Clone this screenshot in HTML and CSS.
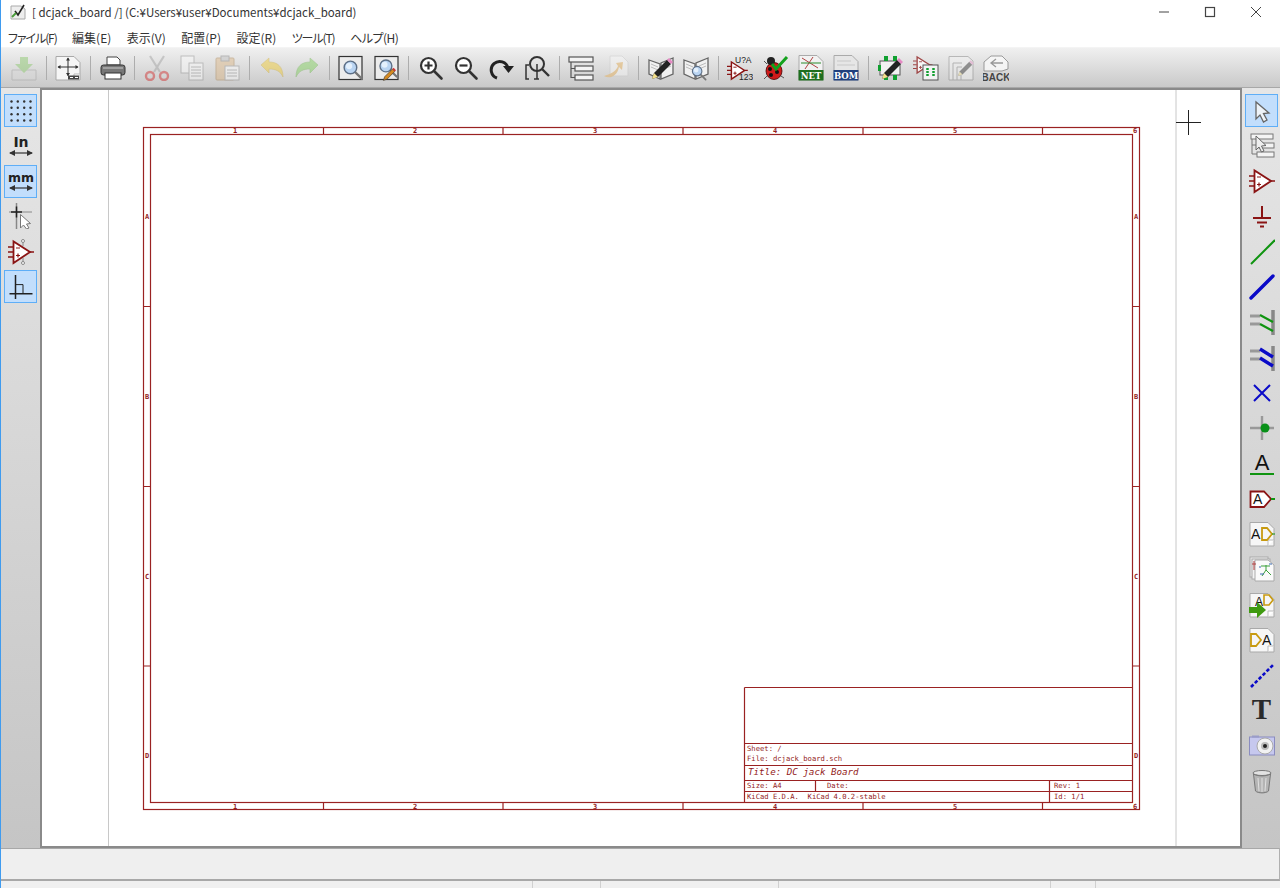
FILE: index.html

```html
<!DOCTYPE html>
<html>
<head>
    <title>dcjack_board</title>
    <link rel="stylesheet" href="styles.css">
</head>
<body>
<svg class="defs" width="0" height="0">
    <defs>
        <g id="amp">
            <path d="M5.5 2.5V24L22 13Z" fill="#fff" stroke="#8a1414" stroke-width="1.8" stroke-linejoin="miter"/>
            <path d="M0 8H5M0 13H5M0 18H5M22 13H26" stroke="#8a1414" stroke-width="1.5"/>
            <path d="M8 9H12M8 16.5H12M10 14.5V18.5" stroke="#8a1414" stroke-width="1.2"/>
        </g>
        <g id="lens">
            <path d="M15 15L23 23" stroke="#777" stroke-width="2.6" stroke-linecap="round"/>
            <circle cx="10.5" cy="10.5" r="7" fill="#b9d4f2" stroke="#5d6f86" stroke-width="1.6"/>
            <circle cx="9" cy="9" r="3.5" fill="#e4f0fc"/>
        </g>
        <g id="zoomglass">
            <circle cx="10.5" cy="10.5" r="7.5" fill="#fff" stroke="#333" stroke-width="2.2"/>
            <path d="M16 16L23.5 23.5" stroke="#333" stroke-width="2.6" stroke-linecap="round"/>
        </g>
        <g id="pencil">
            <path d="M4 24L6 18L19 5L23 9L10 22Z" fill="#222"/>
            <path d="M4 24L6 18L10 22Z" fill="#f3df8a"/>
            <path d="M19 5L21 3L25 7L23 9Z" fill="#e58ac4"/>
        </g>
        <g id="book">
            <path d="M1 5L12 9V24L1 19Z" fill="#f1f1f1" stroke="#666" stroke-width="1.3"/>
            <path d="M25 3L13 8V24L25 19Z" fill="#f1f1f1" stroke="#666" stroke-width="1.3"/>
            <path d="M3 9L10 12M3 12L10 15M16 11L23 8M16 14L23 11" stroke="#bbb" stroke-width="1"/>
        </g>
        <g id="doc">
            <path d="M1 1.5H19L25 7.5V25H1Z" fill="#f6f6f6" stroke="#a9a9a9"/>
            <path d="M19 25V19H25" fill="#fff" stroke="#bbb"/>
        </g>
    </defs>
</svg>

<div class="window">
    <div class="titlebar">
        <svg class="app-icon" viewBox="0 0 16 16">
            <path d="M1 2H11L15 5V15H1Z" fill="#eee" stroke="#aaa"/>
            <path d="M5 7L8 11L14 1" fill="none" stroke="#222" stroke-width="1.6"/>
            <path d="M2 13L6 9" stroke="#4a9c3a" stroke-width="2"/>
        </svg>
        <span class="title-text">[ dcjack_board /] (C:¥Users¥user¥Documents¥dcjack_board)</span>
        <div class="win-buttons">
            <div class="win-btn"><svg viewBox="0 0 12 12" width="12" height="12"><path d="M1 6H11" stroke="#444" stroke-width="1"/></svg></div>
            <div class="win-btn"><svg viewBox="0 0 12 12" width="12" height="12"><rect x="1.5" y="1.5" width="9" height="9" fill="none" stroke="#444" stroke-width="1.2"/></svg></div>
            <div class="win-btn"><svg viewBox="0 0 12 12" width="12" height="12"><path d="M1 1L11 11M11 1L1 11" stroke="#444" stroke-width="1"/></svg></div>
        </div>
    </div>

    <div class="menubar">
        <span class="kana">ファイル(F)</span>
        <span>編集(E)</span>
        <span>表示(V)</span>
        <span>配置(P)</span>
        <span>設定(R)</span>
        <span class="kana">ツール(T)</span>
        <span class="kana-wide">ヘルプ(H)</span>
    </div>

    <div class="toolbar">
        <div class="tool off"><svg viewBox="0 0 26 26"><path d="M1 15H25V25H1Z" fill="#d8d8d8" stroke="#999"/><path d="M9 2H17V9H22L13 18L4 9H9Z" fill="#7fc45c"/></svg></div>
        <div class="sep"></div>
        <div class="tool"><svg viewBox="0 0 26 26"><use href="#doc"/><path d="M13 3V21M3 12H23" stroke="#333" stroke-width="1"/><path d="M13 2.500L11 5.500H15ZM13 21L11 18H15ZM2.500 12L5.500 10V14ZM23.500 12L20.500 10V14Z" fill="#333"/><rect x="13" y="20.500" width="11" height="4" fill="#444"/><path d="M15 22.500H18M20 22.500H23" stroke="#fff"/></svg></div>
        <div class="sep"></div>
        <div class="tool"><svg viewBox="0 0 26 26"><path d="M7 2H17L20 5V10H7Z" fill="#fff" stroke="#444"/><rect x="1" y="10" width="24" height="10" rx="2.5" fill="#777" stroke="#333"/><rect x="5" y="18" width="16" height="6" fill="#fff" stroke="#333"/><path d="M3 13H23" stroke="#ccc"/></svg></div>
        <div class="sep"></div>
        <div class="tool off"><svg viewBox="0 0 26 26"><path d="M6 1L16 17M20 1L10 17" stroke="#999" stroke-width="2.2"/><circle cx="6" cy="21" r="4" fill="none" stroke="#d01818" stroke-width="2.4"/><circle cx="20" cy="21" r="4" fill="none" stroke="#d01818" stroke-width="2.4"/></svg></div>
        <div class="tool off"><svg viewBox="0 0 26 26"><rect x="2" y="1" width="13" height="17" fill="#fff" stroke="#888"/><rect x="10" y="8" width="14" height="17" fill="#fff" stroke="#888"/><path d="M12 12H22M12 15H22M12 18H22M12 21H22" stroke="#888"/></svg></div>
        <div class="tool off"><svg viewBox="0 0 26 26"><rect x="2" y="3" width="18" height="22" rx="1" fill="#dcb27c" stroke="#a57c46"/><rect x="7" y="1" width="8" height="5" fill="#bbb" stroke="#777"/><rect x="11" y="11" width="14" height="14" fill="#fff" stroke="#888"/><path d="M13 15H23M13 18H23M13 21H23" stroke="#888"/></svg></div>
        <div class="sep"></div>
        <div class="tool off"><svg viewBox="0 0 26 26"><path d="M2 10L10 3V7C18 7 24 11 24 22C21 16 17 14 10 14V18Z" fill="#f2c81e" stroke="#c69c10" stroke-width=".6"/></svg></div>
        <div class="tool off"><svg viewBox="0 0 26 26"><path d="M24 10L16 3V7C8 7 2 11 2 22C5 16 9 14 16 14V18Z" fill="#73cc4b" stroke="#52a42e" stroke-width=".6"/></svg></div>
        <div class="sep"></div>
        <div class="tool"><svg viewBox="0 0 26 26"><rect x="1" y="1.5" width="23" height="23" fill="#ececec" stroke="#333" stroke-width="1.2"/><g transform="translate(3 3) scale(.9)"><use href="#lens"/></g></svg></div>
        <div class="tool"><svg viewBox="0 0 26 26"><rect x="1" y="1.5" width="23" height="23" fill="#ececec" stroke="#333" stroke-width="1.2"/><g transform="translate(3 2) scale(.85)"><use href="#lens"/></g><g transform="translate(7 11) scale(.6)"><path d="M4 24L6 18L19 5L23 9L10 22Z" fill="#d58a22" stroke="#333"/><path d="M19 5L21 3L25 7L23 9Z" fill="#d03030"/></g></svg></div>
        <div class="sep"></div>
        <div class="tool"><svg viewBox="0 0 26 26"><use href="#zoomglass"/><path d="M6.5 10.5H14.5M10.5 6.5V14.5" stroke="#333" stroke-width="2.2"/></svg></div>
        <div class="tool"><svg viewBox="0 0 26 26"><use href="#zoomglass"/><path d="M6.5 10.5H14.5" stroke="#333" stroke-width="2.2"/></svg></div>
        <div class="tool"><svg viewBox="0 0 26 26"><path d="M8 23A8.5 8.5 0 1 1 19 13" fill="none" stroke="#222" stroke-width="3"/><path d="M14 11H25L19.500 18Z" fill="#222"/></svg></div>
        <div class="tool"><svg viewBox="0 0 26 26"><circle cx="13" cy="9" r="7" fill="none" stroke="#333" stroke-width="2"/><path d="M18 14L25 21" stroke="#333" stroke-width="2.4"/><path d="M5 10H2V24H5M13 9V24M10 24H15" fill="none" stroke="#333" stroke-width="1.5"/></svg></div>
        <div class="sep"></div>
        <div class="tool"><svg viewBox="0 0 26 26"><rect x="1" y="2" width="24" height="5" fill="#f4f4f4" stroke="#555" stroke-width="1.2"/><rect x="7" y="11" width="18" height="5" fill="#f4f4f4" stroke="#555" stroke-width="1.2"/><rect x="7" y="20" width="18" height="5" fill="#f4f4f4" stroke="#555" stroke-width="1.2"/><path d="M3 7V22.500H7M3 13.500H7" fill="none" stroke="#555" stroke-width="1.2"/></svg></div>
        <div class="tool off"><svg viewBox="0 0 26 26"><path d="M7 1H19L25 7V21H7Z" fill="#fafafa" stroke="#c8c8c8"/><path d="M1 21C6 24 14 22 16 12L19 15L20 7L13 8L15 11C13 17 7 19 1 21Z" fill="#e8aa48"/></svg></div>
        <div class="sep"></div>
        <div class="tool"><svg viewBox="0 0 26 26"><use href="#book"/><use href="#pencil"/></svg></div>
        <div class="tool"><svg viewBox="0 0 26 26"><use href="#book"/><g transform="translate(7 9) scale(.68)"><use href="#lens"/></g></svg></div>
        <div class="sep"></div>
        <div class="tool"><svg viewBox="0 0 26 26"><g transform="translate(0 5) scale(.8)"><use href="#amp"/></g><text x="8" y="8" class="ic-annot">U?A</text><text x="12" y="25" class="ic-annot">123</text></svg></div>
        <div class="tool"><svg viewBox="0 0 26 26"><ellipse cx="11" cy="16" rx="8" ry="8.500" fill="#d01a1a" stroke="#400" stroke-width=".8"/><circle cx="8" cy="6" r="4" fill="#222"/><circle cx="7" cy="14" r="2" fill="#111"/><circle cx="14" cy="17" r="2" fill="#111"/><circle cx="8" cy="20" r="2" fill="#111"/><path d="M1 6L4 9M1 24L4 21M21 23L18 21" stroke="#555"/><path d="M9 9L13 14L24 2" fill="none" stroke="#13a11c" stroke-width="3"/></svg></div>
        <div class="tool"><svg viewBox="0 0 26 26"><path d="M1 0.500H19L25 6.500V25H1Z" fill="#f2f2f2" stroke="#aaa"/><path d="M4 3L20 13M15 2L7 14" stroke="#b04040"/><path d="M3 8H23" stroke="#2d8a2d"/><rect x="0.500" y="15" width="25" height="10.500" fill="#1e6e1e"/><text x="13" y="24" class="ic-label">NET</text></svg></div>
        <div class="tool"><svg viewBox="0 0 26 26"><path d="M1 0.500H19L25 6.500V25H1Z" fill="#e6e6e6" stroke="#aaa"/><path d="M4 6H18M4 10H22" stroke="#c8c8c8"/><rect x="0.500" y="15" width="25" height="10.500" fill="#20407e"/><text x="13" y="24" class="ic-label">BOM</text></svg></div>
        <div class="sep"></div>
        <div class="tool"><svg viewBox="0 0 26 26"><rect x="2" y="6" width="20" height="14" fill="#f2f2f2" stroke="#555"/><path d="M6 1H10V6H6ZM15 1H19V6H15ZM6 20H10V25H6ZM15 20H19V25H15ZM0 10H3V16H0Z" fill="#10a030"/><use href="#pencil"/></svg></div>
        <div class="tool"><svg viewBox="0 0 26 26"><g opacity=".75" transform="scale(.75)"><use href="#amp"/></g><rect x="10" y="10" width="15" height="15" fill="#f4f4f4" stroke="#555"/><path d="M14.500 13V22M20.500 13V22" stroke="#12a030" stroke-width="2.500" stroke-dasharray="2 1"/></svg></div>
        <div class="tool off"><svg viewBox="0 0 26 26"><path d="M1 1.500H20L25 6V25H1Z" fill="#f5f5f5" stroke="#777"/><path d="M5 25V8H14M9 25V12H14M13 25V17" fill="none" stroke="#777"/><g transform="translate(7 3) scale(.75)"><use href="#pencil"/></g></svg></div>
        <div class="tool off back"><svg viewBox="0 0 26 26"><path d="M1 7L8 1H19L25 7V14L19 16H1Z" fill="#fafafa" stroke="#888"/><path d="M20 8H9M13 4L8 8L13 12" fill="none" stroke="#888" stroke-width="1.3"/><text x="13" y="25.500" class="ic-back">BACK</text></svg></div>
    </div>

    <div class="middle">
        <div class="side-tools side-left">
            <div class="side-btn active"><svg viewBox="0 0 26 26"><g fill="#333"><circle cx="3.500" cy="3.500" r="1.200"/><circle cx="9.800" cy="3.500" r="1.200"/><circle cx="16.200" cy="3.500" r="1.200"/><circle cx="22.500" cy="3.500" r="1.200"/><circle cx="3.500" cy="9.800" r="1.200"/><circle cx="9.800" cy="9.800" r="1.200"/><circle cx="16.200" cy="9.800" r="1.200"/><circle cx="22.500" cy="9.800" r="1.200"/><circle cx="3.500" cy="16.200" r="1.200"/><circle cx="9.800" cy="16.200" r="1.200"/><circle cx="16.200" cy="16.200" r="1.200"/><circle cx="22.500" cy="16.200" r="1.200"/><circle cx="3.500" cy="22.500" r="1.200"/><circle cx="9.800" cy="22.500" r="1.200"/><circle cx="16.200" cy="22.500" r="1.200"/><circle cx="22.500" cy="22.500" r="1.200"/></g></svg></div>
            <div class="side-btn"><svg viewBox="0 0 26 26"><text x="13" y="14" class="ic-unit">In</text><path d="M2 20H24" stroke="#333" stroke-width="1.200"/><path d="M1 20L7 17V23ZM25 20L19 17V23Z" fill="#333"/></svg></div>
            <div class="side-btn active"><svg viewBox="0 0 26 26"><text x="13" y="14" class="ic-unit ic-mm">mm</text><path d="M2 20H24" stroke="#333" stroke-width="1.200"/><path d="M1 20L7 17V23ZM25 20L19 17V23Z" fill="#333"/></svg></div>
            <div class="side-btn"><svg viewBox="0 0 26 26"><path d="M8.500 0V26" stroke="#888" stroke-width="1.500"/><path d="M1 9H24" stroke="#888" stroke-width="1"/><path d="M3 9H14M8.500 3.500V14.500" stroke="#222" stroke-width="1.500"/><path d="M12.500 11.500V25L15.500 22L18.500 26L21 25L18.500 21L22.500 20.500Z" fill="#fff" stroke="#777"/></svg></div>
            <div class="side-btn"><svg viewBox="0 0 26 26"><use href="#amp"/><path d="M15 7V2M15 19V24" stroke="#888"/><circle cx="15" cy="2" r="1.500" fill="#fff" stroke="#888"/><circle cx="15" cy="24" r="1.500" fill="#fff" stroke="#888"/></svg></div>
            <div class="side-btn active"><svg viewBox="0 0 26 26"><path d="M7.500 1V25M1.500 19.700H24.500" stroke="#222" stroke-width="1.500"/><path d="M7.500 10.600H15V19.700" fill="none" stroke="#222"/></svg></div>
        </div>

        <div class="canvas">
            <svg class="sheet" viewBox="42 90 1198 756">
                <g fill="none" stroke="#c8c8c8">
                    <path d="M108.500 90V846M1176 90V846"/>
                </g>
                <g fill="none" stroke="#9a2222" stroke-width="1.200">
                    <rect x="143.500" y="127.500" width="996" height="682"/>
                    <rect x="150.500" y="134.500" width="982" height="668"/>
                    <path d="M323.500 127V134M503 127V134M683 127V134M863 127V134M1042.500 127V134"/>
                    <path d="M323.500 803V810M503 803V810M683 803V810M863 803V810M1042.500 803V810"/>
                    <path d="M144 306.500H151M144 486.500H151M144 666H151M1133 306.500H1140M1133 486.500H1140M1133 666H1140"/>
                    <path d="M744.500 687.500H1133M744.500 687.500V802M744.500 743.500H1133M744.500 765.500H1133M744.500 780.500H1133M744.500 791.500H1133M815.500 780V791M1049.500 780V802"/>
                </g>
                <g class="sheet-tick">
                    <text x="235" y="133">1</text><text x="415" y="133">2</text><text x="595" y="133">3</text><text x="775" y="133">4</text><text x="955" y="133">5</text><text x="1135" y="133">6</text>
                    <text x="235" y="809">1</text><text x="415" y="809">2</text><text x="595" y="809">3</text><text x="775" y="809">4</text><text x="955" y="809">5</text><text x="1135" y="809">6</text>
                    <text x="147" y="219">A</text><text x="147" y="399">B</text><text x="147" y="579">C</text><text x="147" y="758">D</text>
                    <text x="1136" y="219">A</text><text x="1136" y="399">B</text><text x="1136" y="579">C</text><text x="1136" y="758">D</text>
                </g>
                <g class="sheet-text">
                    <text x="747" y="751">Sheet: /</text>
                    <text x="747" y="761">File: dcjack_board.sch</text>
                    <text x="747" y="788">Size: A4</text>
                    <text x="827" y="788">Date:</text>
                    <text x="1054" y="788">Rev: 1</text>
                    <text x="747" y="798.500">KiCad E.D.A.  KiCad 4.0.2-stable</text>
                    <text x="1054" y="798.500">Id: 1/1</text>
                </g>
                <text x="748" y="775" class="sheet-title">Title: DC jack Board</text>
                <path d="M1176 122.500H1201M1188.500 110V135" stroke="#222" stroke-width="1"/>
            </svg>
        </div>

        <div class="side-tools side-right">
            <div class="side-btn active"><svg viewBox="0 0 26 26"><path d="M7 4V21L11 17L14.500 24L18 22L14.500 15.500L20 15Z" fill="#eef3f8" stroke="#666" stroke-width="1.300"/></svg></div>
            <div class="side-btn"><svg viewBox="0 0 26 26"><rect x="2" y="1" width="22" height="5" fill="#f4f4f4" stroke="#777"/><rect x="10" y="10" width="15" height="5" fill="#f4f4f4" stroke="#777"/><rect x="8" y="19" width="17" height="5" fill="#f4f4f4" stroke="#777"/><path d="M3 6V21H8M3 12H10" fill="none" stroke="#777"/><path d="M7 3V17L10 14L12.500 19L15 18L12.500 13L17 12.500Z" fill="#eee" stroke="#666"/></svg></div>
            <div class="side-btn"><svg viewBox="0 0 26 26"><use href="#amp"/></svg></div>
            <div class="side-btn"><svg viewBox="0 0 26 26"><path d="M13 3V15M4 15H22M8 19.500H18M11 23.500H15" stroke="#8a1414" stroke-width="2"/></svg></div>
            <div class="side-btn"><svg viewBox="0 0 26 26"><path d="M2 25L26 1" stroke="#0f9410" stroke-width="2"/></svg></div>
            <div class="side-btn"><svg viewBox="0 0 26 26"><path d="M2 24L24 2" stroke="#0a0ac8" stroke-width="3.400" stroke-linecap="round"/></svg></div>
            <div class="side-btn"><svg viewBox="0 0 26 26"><path d="M1 7H11M1 15H11" stroke="#999" stroke-width="3"/><path d="M24 1V26" stroke="#888" stroke-width="3.500"/><path d="M11 6L24 13M11 15L24 22" stroke="#0f9410" stroke-width="2.200"/></svg></div>
            <div class="side-btn"><svg viewBox="0 0 26 26"><path d="M1 6H11M1 14H11" stroke="#999" stroke-width="3"/><path d="M24 1V26" stroke="#888" stroke-width="3.500"/><path d="M11 4L24 12M11 13L24 21" stroke="#0a0ac8" stroke-width="3.400"/></svg></div>
            <div class="side-btn"><svg viewBox="0 0 26 26"><path d="M5 5L21 21M21 5L5 21" stroke="#0a0ac8" stroke-width="2"/></svg></div>
            <div class="side-btn"><svg viewBox="0 0 26 26"><path d="M13 1V25M1 13H25" stroke="#999" stroke-width="2.400"/><circle cx="16" cy="13" r="4.500" fill="#089018"/></svg></div>
            <div class="side-btn"><svg viewBox="0 0 26 26"><text x="13" y="20" class="ic-a">A</text><path d="M1 24H25" stroke="#0f9410" stroke-width="2"/></svg></div>
            <div class="side-btn"><svg viewBox="0 0 26 26"><path d="M1.500 5.500H15L22 13L15 21H1.500Z" fill="#fff" stroke="#8a1414" stroke-width="1.800"/><path d="M22 13H26" stroke="#0f9410" stroke-width="2"/><text x="4" y="18" class="ic-a-small">A</text></svg></div>
            <div class="side-btn"><svg viewBox="0 0 26 26"><use href="#doc"/><text x="2" y="18" class="ic-a-small">A</text><path d="M13 7H18L23 13L18 19H13Z" fill="none" stroke="#c89a10" stroke-width="1.800"/><path d="M23 13H26" stroke="#0f9410"/></svg></div>
            <div class="side-btn"><svg viewBox="0 0 26 26"><rect x="1" y="1" width="18" height="20" fill="#eee" stroke="#aaa"/><rect x="3" y="3" width="18" height="20" fill="#f3f3f3" stroke="#aaa"/><path d="M6 4H19L25 9V25H6Z" fill="#fafafa" stroke="#aaa"/><path d="M5 5V14M3 8H7" stroke="#b04040"/><path d="M12 10H21M17 9V14M13 20L17 14L22 19" fill="none" stroke="#3aa03a"/><path d="M10 11H12M20 8H23M11 18H15" stroke="#3a6ab0"/></svg></div>
            <div class="side-btn"><svg viewBox="0 0 26 26"><use href="#doc"/><text x="6" y="14" class="ic-a-tiny">A</text><path d="M15 3H20L24 8L20 13H15Z" fill="none" stroke="#c89a10" stroke-width="1.600"/><path d="M0 15H8V10L17 18L8 26V21H0Z" fill="#3f9a10"/></svg></div>
            <div class="side-btn"><svg viewBox="0 0 26 26"><use href="#doc"/><path d="M2 7H7L12 13L7 19H2Z" fill="none" stroke="#c89a10" stroke-width="1.800"/><text x="13" y="18" class="ic-a-small">A</text></svg></div>
            <div class="side-btn"><svg viewBox="0 0 26 26"><path d="M2 25L25 2" stroke="#0a0ac8" stroke-width="2.600" stroke-dasharray="3.500 2"/></svg></div>
            <div class="side-btn"><span class="big-t">T</span></div>
            <div class="side-btn"><svg viewBox="0 0 26 26"><rect x="0.500" y="4" width="25" height="18" fill="#c6c8ee" stroke="#8a8cc0"/><rect x="3" y="2.500" width="7" height="2" fill="#9a9cc8"/><circle cx="16" cy="13" r="8" fill="#f2f2f2" stroke="#aaa"/><circle cx="16" cy="13" r="4" fill="#bbb"/><circle cx="16" cy="13" r="2" fill="#222"/></svg></div>
            <div class="side-btn"><svg viewBox="0 0 26 26"><ellipse cx="13" cy="5" rx="9" ry="2.500" fill="#e2e2e2" stroke="#777"/><path d="M4.500 6L6.500 23C9 25.500 17 25.500 19.500 23L21.500 6C18 8.500 8 8.500 4.500 6Z" fill="#b4b4b4" stroke="#777"/><path d="M9 10L10 23M13 10V24M17 10L16 23" stroke="#e0e0e0"/></svg></div>
        </div>
    </div>

    <div class="msg-panel"></div>

    <div class="statusbar">
        <div class="field field-main"></div>
        <div class="field field-b"></div>
        <div class="field field-c"></div>
        <div class="field field-d"></div>
        <div class="field field-e"></div>
        <div class="field field-f"></div>
    </div>
</div>
</body>
</html>
```

FILE: styles.css

```css
* {
    box-sizing: border-box;
}

html, body {
    margin: 0;
    height: 100%;
    overflow: hidden;
    background-color: #fff;
}

.defs {
    position: absolute;
}

.window {
    display: flex;
    flex-direction: column;
    width: 1280px;
    height: 888px;
    border-left: 1px solid #3f9bef;
    font-family: "Noto Sans CJK JP", "Liberation Sans", sans-serif;
    font-size: 12px;
    font-feature-settings: "palt";
    color: #222;
}

.titlebar {
    display: flex;
    align-items: center;
    flex-shrink: 0;
    height: 24px;
    padding: 0 0 1px 9px;
    background-color: #fff;
}

.app-icon {
    width: 16px;
    height: 16px;
    margin-right: 6px;
}

.title-text {
    font-size: 11.5px;
    color: #333;
    white-space: pre;
}

.win-buttons {
    display: flex;
    margin-left: auto;
    padding-right: 1px;
}

.win-btn {
    display: flex;
    justify-content: center;
    align-items: center;
    width: 46px;
    height: 23px;
}

.menubar {
    display: flex;
    align-items: center;
    flex-shrink: 0;
    gap: 15.5px;
    height: 23px;
    padding: 3px 0 0 7px;
    background-color: #fff;
    color: #333;
}

.kana {
    letter-spacing: -1.1px;
}

.kana-wide {
    letter-spacing: -0.5px;
}

.toolbar {
    display: flex;
    align-items: center;
    flex-shrink: 0;
    height: 41px;
    padding-left: 5.35px;
    border-top: 1px solid #f4f4f4;
    border-bottom: 1px solid #a8a8a8;
    background: linear-gradient(#f0f0f0, #c9c9c9);
}

.tool {
    display: flex;
    justify-content: center;
    align-items: center;
    width: 35.3px;
    height: 30px;
    flex-shrink: 0;
}

.tool svg {
    width: 26px;
    height: 26px;
}

.tool.off svg {
    opacity: 0.42;
}

.tool.back svg {
    opacity: 0.8;
}

.sep {
    width: 1px;
    height: 24px;
    margin: 0 4px;
    flex-shrink: 0;
    background-color: #adadad;
}

.middle {
    display: flex;
    flex: 1;
    min-height: 0;
}

.side-tools {
    display: flex;
    flex-direction: column;
    gap: 2.3px;
    padding: 6px 0 0 3px;
    background: linear-gradient(#e6e6e6, #c5c5c5);
}

.side-left {
    width: 39px;
}

.side-right {
    width: 38px;
}

.side-btn {
    display: flex;
    justify-content: center;
    align-items: center;
    width: 33px;
    height: 33px;
    flex-shrink: 0;
    border: 1px solid transparent;
}

.side-btn svg {
    width: 26px;
    height: 26px;
}

.side-btn.active {
    border-color: #5eaef7;
    background-color: #c2defc;
}

.big-t {
    margin-top: -2px;
    font-family: "Liberation Serif", serif;
    font-size: 29px;
    font-weight: bold;
    line-height: 29px;
    color: #2a2a2a;
}

.canvas {
    flex: 1;
    min-width: 0;
    border: 2px solid #8a8a8a;
    background-color: #fff;
}

.sheet {
    display: block;
    width: 100%;
    height: 100%;
}

.sheet-tick text {
    font-family: "DejaVu Sans Mono", monospace;
    font-size: 7px;
    font-weight: bold;
    fill: #931c1c;
    text-anchor: middle;
}

.sheet-text text {
    font-family: "DejaVu Sans Mono", monospace;
    font-size: 7.2px;
    fill: #931c1c;
    white-space: pre;
}

.sheet-title {
    font-family: "DejaVu Sans Mono", monospace;
    font-size: 9.2px;
    font-style: italic;
    fill: #931c1c;
}

.ic-annot {
    font-family: "Liberation Sans", sans-serif;
    font-size: 8.5px;
    fill: #222;
}

.ic-label {
    font-family: "DejaVu Serif", serif;
    font-size: 8.5px;
    font-weight: bold;
    fill: #fff;
    text-anchor: middle;
}

.ic-back {
    font-family: "Liberation Sans", sans-serif;
    font-size: 10px;
    font-weight: bold;
    fill: #222;
    text-anchor: middle;
}

.ic-unit {
    font-family: "DejaVu Sans", sans-serif;
    font-size: 14px;
    font-weight: bold;
    fill: #222;
    text-anchor: middle;
}

.ic-mm {
    font-size: 12.5px;
}

.ic-a {
    font-family: "Liberation Sans", sans-serif;
    font-size: 22px;
    fill: #111;
    text-anchor: middle;
}

.ic-a-small {
    font-family: "Liberation Sans", sans-serif;
    font-size: 14px;
    fill: #111;
}

.ic-a-tiny {
    font-family: "Liberation Sans", sans-serif;
    font-size: 12px;
    fill: #111;
}

.msg-panel {
    flex-shrink: 0;
    height: 33px;
    border-top: 1px solid #a8a8a8;
    border-right: 1px solid #b0b0b0;
    border-bottom: 2px solid #a8a8a8;
    background-color: #efefef;
}

.statusbar {
    display: flex;
    flex-shrink: 0;
    height: 7px;
    background-color: #f0f0f0;
}

.field {
    border-right: 1px solid #d0d0d0;
}

.field-main {
    width: 532px;
}

.field-b {
    width: 68px;
}

.field-c {
    width: 178px;
}

.field-d {
    width: 272px;
}

.field-e {
    width: 45px;
}

.field-f {
    flex: 1;
    border-right: 0;
}
```
